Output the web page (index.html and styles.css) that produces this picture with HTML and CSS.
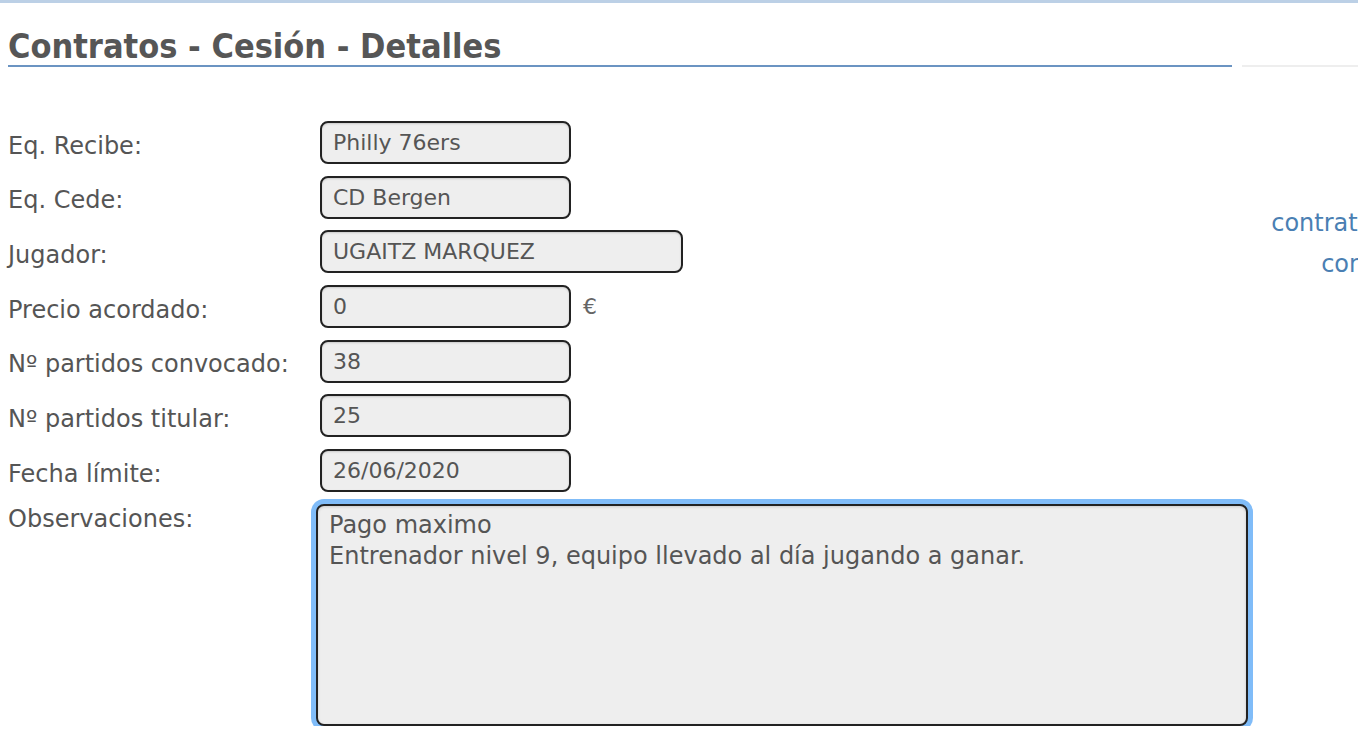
FILE: index.html
```html
<!DOCTYPE html>
<html lang="es">
<head>
  <meta charset="UTF-8" />
  <meta name="viewport" content="width=device-width, initial-scale=1.0"/>
  <title>Contratos - Cesión - Detalles</title>
  <link rel="stylesheet" href="styles.css">
</head>
<body>
  <div class="topbar"></div>
  <div class="page">
    <div class="main">
      <h1>Contratos - Cesión - Detalles</h1>

      <!-- Detalle de la cesión -->
      <div class="form">
        <div class="row">
          <label>Eq. Recibe:</label>
          <input class="field" value="Philly 76ers" readonly />
        </div>
        <div class="row">
          <label>Eq. Cede:</label>
          <input class="field" value="CD Bergen" readonly />
        </div>
        <div class="row">
          <label>Jugador:</label>
          <input class="field wide" value="UGAITZ MARQUEZ" readonly />
        </div>
        <div class="row">
          <label>Precio acordado:</label>
          <input class="field" value="0" readonly />
          <span class="unit">€</span>
        </div>
        <div class="row">
          <label>Nº partidos convocado:</label>
          <input class="field" value="38" readonly />
        </div>
        <div class="row">
          <label>Nº partidos titular:</label>
          <input class="field" value="25" readonly />
        </div>
        <div class="row">
          <label>Fecha límite:</label>
          <input class="field" value="26/06/2020" readonly />
        </div>
        <div class="row row-top">
          <label class="label-obs">Observaciones:</label>
          <textarea class="notes" readonly>Pago maximo
Entrenador nivel 9, equipo llevado al día jugando a ganar.</textarea>
        </div>
      </div>
    </div>

    <div class="side">
      <div class="side-head"></div>
      <a class="side-link" href="#">contratos cedidos</a>
      <a class="side-link" href="#">contratos</a>
    </div>
  </div>
</body>
</html>
```

FILE: styles.css
```css
body {
  margin: 0;
  font-family: "DejaVu Sans", Verdana, sans-serif;
  color: #555;
  background: white;
  overflow: hidden;
}
.topbar {
  height: 3px;
  background: #bcd0e6;
}
.page {
  display: flex;
}
.main {
  margin-left: 8px;
  width: 1224px;
  flex-shrink: 0;
}
h1 {
  margin: 24px 0 0;
  height: 38px;
  line-height: 38px;
  font-family: "DejaVu Sans Condensed", "DejaVu Sans", sans-serif;
  font-weight: bold;
  font-size: 34px;
  color: #565656;
  border-bottom: 2px solid #6b94c2;
}
.form {
  margin-top: 54px;
  display: flex;
  flex-direction: column;
  gap: 11.7px;
}
.row {
  display: flex;
  align-items: center;
  height: 43px;
}
.row label {
  width: 312px;
  flex-shrink: 0;
  padding-top: 6px;
  font-size: 24px;
  color: #555;
}
.field {
  box-sizing: border-box;
  flex-shrink: 0;
  width: 251px;
  height: 43px;
  padding: 0 11px;
  font-family: "DejaVu Sans", Verdana, sans-serif;
  font-size: 22px;
  color: #555;
  background: #eee;
  border: 2px solid #222;
  border-radius: 8px;
  box-shadow: inset 0 1px 2px rgba(0, 0, 0, 0.15);
  outline: none;
}
.field.wide {
  width: 363px;
}
.unit {
  margin-left: 12px;
  font-size: 22px;
  color: #666;
}
.row-top {
  align-items: flex-start;
  height: auto;
}
.row-top .label-obs {
  width: 308px;
  line-height: 30px;
  padding-top: 0;
}
.notes {
  box-sizing: border-box;
  flex-shrink: 0;
  width: 932px;
  height: 222px;
  padding: 4px 11px;
  font-family: "DejaVu Sans", Verdana, sans-serif;
  font-size: 24px;
  line-height: 31px;
  color: #555;
  background: #eee;
  border: 2px solid #222;
  border-radius: 8px;
  box-shadow: 0 0 0 5px #80bcf8, inset 0 1px 3px rgba(0, 0, 0, 0.15);
  outline: none;
  resize: none;
}
.side {
  margin-left: 10px;
  width: 272px;
  flex-shrink: 0;
  text-align: center;
}
.side-head {
  margin-top: 24px;
  height: 38px;
  border-bottom: 2px solid #eee;
  margin-bottom: 136px;
}
.side-link {
  display: block;
  font-size: 24px;
  line-height: 41px;
  color: #4a7fb3;
  text-decoration: none;
  white-space: nowrap;
}
```
